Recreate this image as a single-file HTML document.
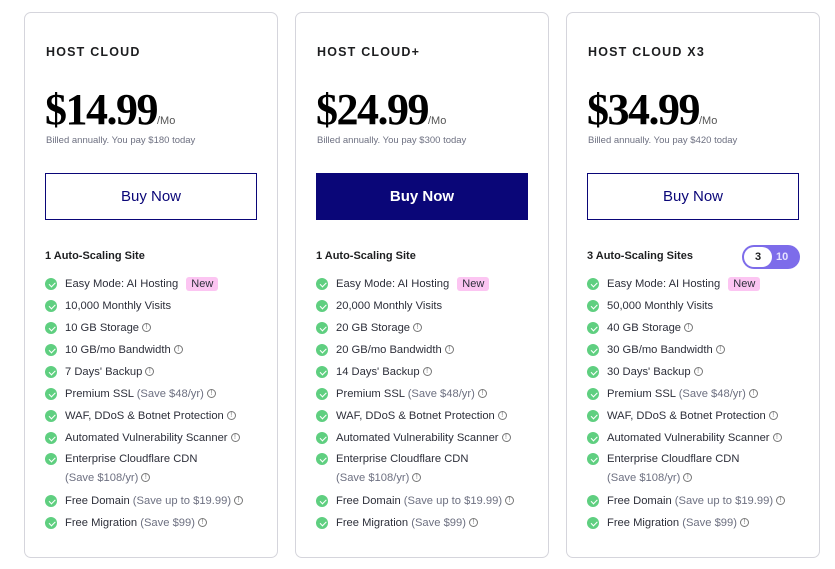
<!DOCTYPE html>
<html><head><meta charset="utf-8"><style>
*{box-sizing:border-box;margin:0;padding:0}
body{width:835px;height:569px;background:#fff;font-family:"Liberation Sans",sans-serif;color:#2f1c6a;position:relative;overflow:hidden}
.card{position:absolute;top:12px;width:254px;height:546px;border:1px solid #d5d5dc;border-radius:7px}
.t{position:absolute;left:21px;top:32px;font-size:12.5px;font-weight:bold;letter-spacing:1.2px;color:#1d1e20}
.p{position:absolute;left:20px;top:71px;font-family:"Liberation Serif",serif;font-weight:bold;font-size:44px;letter-spacing:-1.5px;color:#000;white-space:nowrap}
.p span{font-family:"Liberation Sans",sans-serif;font-weight:normal;font-size:11px;letter-spacing:0;color:#555}
.b{position:absolute;left:21px;top:122px;font-size:9.5px;color:#6d7081}
.btn{position:absolute;left:20px;top:160px;width:212px;height:47px;border:1px solid #0a0678;color:#0a0678;font-size:15px;display:flex;align-items:center;justify-content:center}
.btn.f{background:#0a0678;color:#fff;font-weight:bold}
.h{position:absolute;left:20px;top:237px;font-size:11px;font-weight:bold;color:#1d1e20}
ul{position:absolute;left:20px;top:260px;list-style:none;width:230px}
li{position:relative;padding-left:20px;font-size:11.2px;color:#2d2f3a;line-height:22px;height:22px}
li.two{height:41px;line-height:19px;padding-top:1px}
li:before{content:"";position:absolute;left:0;top:5px;width:12px;height:12px;border-radius:50%;background:#5fcf80}
li:after{content:"";position:absolute;left:3.5px;top:8.5px;width:5px;height:2.5px;border-left:1.6px solid #fff;border-bottom:1.6px solid #fff;transform:rotate(-45deg)}
li.two:before{top:4px}li.two:after{top:7.5px}
.g{color:#6d7081}
.i{display:inline-block;width:9px;height:9px;border:1px solid #777;border-radius:50%;font-size:7px;line-height:7px;text-align:center;color:#777;margin-left:3px;vertical-align:middle;position:relative;top:-1px}
.n{background:#fcc5f2;color:#2d2f3a;padding:1px 5px;margin-left:5px;border-radius:3px;font-size:11px}
.tg{position:absolute;left:175px;top:232px;width:58px;height:24px;border-radius:12px;background:#7d6cea}
.tg .a{position:absolute;left:2px;top:2px;width:28px;height:20px;border-radius:10px;background:#fff;font-size:11px;font-weight:bold;text-align:center;line-height:20px;color:#1d1e20}
.tg .c{position:absolute;left:34px;top:0;line-height:24px;font-size:11px;font-weight:bold;color:#e5e1ff}
</style></head><body>

<div class="card" style="left:24px">
<div class="t">HOST CLOUD</div>
<div class="p">$14.99<span>/Mo</span></div>
<div class="b">Billed annually. You pay $180 today</div>
<div class="btn">Buy Now</div>
<div class="h">1 Auto-Scaling Site</div>
<ul>
<li>Easy Mode: AI Hosting <span class="n">New</span></li>
<li>10,000 Monthly Visits</li>
<li>10 GB Storage<span class="i">!</span></li>
<li>10 GB/mo Bandwidth<span class="i">!</span></li>
<li>7 Days' Backup<span class="i">!</span></li>
<li>Premium SSL <span class="g">(Save $48/yr)</span><span class="i">!</span></li>
<li>WAF, DDoS &amp; Botnet Protection<span class="i">!</span></li>
<li>Automated Vulnerability Scanner<span class="i">!</span></li>
<li class="two">Enterprise Cloudflare CDN<br><span class="g">(Save $108/yr)</span><span class="i">!</span></li>
<li>Free Domain <span class="g">(Save up to $19.99)</span><span class="i">!</span></li>
<li>Free Migration <span class="g">(Save $99)</span><span class="i">!</span></li>
</ul>
</div>

<div class="card" style="left:295px">
<div class="t">HOST CLOUD+</div>
<div class="p">$24.99<span>/Mo</span></div>
<div class="b">Billed annually. You pay $300 today</div>
<div class="btn f">Buy Now</div>
<div class="h">1 Auto-Scaling Site</div>
<ul>
<li>Easy Mode: AI Hosting <span class="n">New</span></li>
<li>20,000 Monthly Visits</li>
<li>20 GB Storage<span class="i">!</span></li>
<li>20 GB/mo Bandwidth<span class="i">!</span></li>
<li>14 Days' Backup<span class="i">!</span></li>
<li>Premium SSL <span class="g">(Save $48/yr)</span><span class="i">!</span></li>
<li>WAF, DDoS &amp; Botnet Protection<span class="i">!</span></li>
<li>Automated Vulnerability Scanner<span class="i">!</span></li>
<li class="two">Enterprise Cloudflare CDN<br><span class="g">(Save $108/yr)</span><span class="i">!</span></li>
<li>Free Domain <span class="g">(Save up to $19.99)</span><span class="i">!</span></li>
<li>Free Migration <span class="g">(Save $99)</span><span class="i">!</span></li>
</ul>
</div>

<div class="card" style="left:566px">
<div class="t">HOST CLOUD X3</div>
<div class="p">$34.99<span>/Mo</span></div>
<div class="b">Billed annually. You pay $420 today</div>
<div class="btn">Buy Now</div>
<div class="h">3 Auto-Scaling Sites</div>
<div class="tg"><div class="a">3</div><div class="c">10</div></div>
<ul>
<li>Easy Mode: AI Hosting <span class="n">New</span></li>
<li>50,000 Monthly Visits</li>
<li>40 GB Storage<span class="i">!</span></li>
<li>30 GB/mo Bandwidth<span class="i">!</span></li>
<li>30 Days' Backup<span class="i">!</span></li>
<li>Premium SSL <span class="g">(Save $48/yr)</span><span class="i">!</span></li>
<li>WAF, DDoS &amp; Botnet Protection<span class="i">!</span></li>
<li>Automated Vulnerability Scanner<span class="i">!</span></li>
<li class="two">Enterprise Cloudflare CDN<br><span class="g">(Save $108/yr)</span><span class="i">!</span></li>
<li>Free Domain <span class="g">(Save up to $19.99)</span><span class="i">!</span></li>
<li>Free Migration <span class="g">(Save $99)</span><span class="i">!</span></li>
</ul>
</div>
</body></html>
